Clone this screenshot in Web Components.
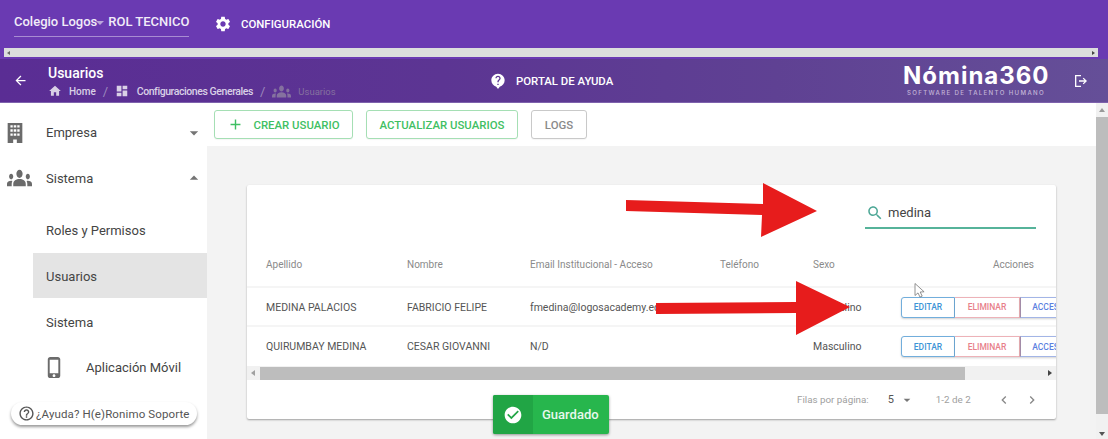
<!DOCTYPE html>
<html lang="es"><head><meta charset="utf-8"><title>Usuarios</title>
<style>
html,body{margin:0;padding:0;height:439px;overflow:hidden;background:#fff;font-family:Roboto,"Liberation Sans",sans-serif}
</style></head><body>
<nm-app></nm-app>
<script>
const P={
gear:'M19.14 12.94c.04-.3.06-.61.06-.94 0-.32-.02-.64-.07-.94l2.03-1.58c.18-.14.23-.41.12-.61l-1.92-3.32c-.12-.22-.37-.29-.59-.22l-2.39.96c-.5-.38-1.03-.7-1.62-.94l-.36-2.54c-.04-.24-.24-.41-.48-.41h-3.84c-.24 0-.43.17-.47.41l-.36 2.54c-.59.24-1.13.57-1.62.94l-2.39-.96c-.22-.08-.47 0-.59.22L2.74 8.87c-.12.21-.08.47.12.61l2.03 1.58c-.05.3-.09.63-.09.94s.02.64.07.94l-2.03 1.58c-.18.14-.23.41-.12.61l1.92 3.32c.12.22.37.29.59.22l2.39-.96c.5.38 1.03.7 1.62.94l.36 2.54c.05.24.24.41.48.41h3.84c.24 0 .44-.17.47-.41l.36-2.54c.59-.24 1.13-.56 1.62-.94l2.39.96c.22.08.47 0 .59-.22l1.92-3.32c.12-.22.07-.47-.12-.61l-2.01-1.58zM12 15.6c-1.98 0-3.6-1.62-3.6-3.6s1.62-3.6 3.6-3.6 3.6 1.62 3.6 3.6-1.62 3.6-3.6 3.6z',
back:'M20 11H7.83l5.59-5.59L12 4l-8 8 8 8 1.41-1.41L7.83 13H20v-2z',
home:'M10 20v-6h4v6h5v-8h3L12 3 2 12h3v8z',
dash:'M3 13h8V3H3v10zm0 8h8v-6H3v6zm10 0h8V11h-8v10zm0-18v6h8V3h-8z',
group:'M12 12.75c1.63 0 3.07.39 4.24.9 1.08.48 1.76 1.56 1.76 2.73V18H6v-1.61c0-1.18.68-2.26 1.76-2.73 1.17-.52 2.61-.91 4.24-.91zM4 13c1.1 0 2-.9 2-2s-.9-2-2-2-2 .9-2 2 .9 2 2 2zm1.13 1.1c-.37-.06-.74-.1-1.13-.1-.99 0-1.93.21-2.78.58C.48 14.9 0 15.62 0 16.43V18h4.5v-1.61c0-.83.23-1.61.63-2.29zM20 13c1.1 0 2-.9 2-2s-.9-2-2-2-2 .9-2 2 .9 2 2 2zm4 3.43c0-.81-.48-1.53-1.22-1.85-.85-.37-1.79-.58-2.78-.58-.39 0-.76.04-1.13.1.4.68.63 1.46.63 2.29V18H24v-1.57zM12 6c1.66 0 3 1.34 3 3s-1.34 3-3 3-3-1.34-3-3 1.34-3 3-3z',
phone:'M15.5 1h-8C6.12 1 5 2.12 5 3.5v17C5 21.88 6.12 23 7.5 23h8c1.38 0 2.5-1.12 2.5-2.5v-17C18 2.12 16.88 1 15.5 1zm-4 21c-.83 0-1.5-.67-1.5-1.5s.67-1.5 1.5-1.5 1.5.67 1.5 1.5-.67 1.5-1.5 1.5zm4.5-4H7V4h9v14z',
helpo:'M11 18h2v-2h-2v2zm1-16C6.48 2 2 6.48 2 12s4.48 10 10 10 10-4.48 10-10S17.52 2 12 2zm0 18c-4.41 0-8-3.59-8-8s3.59-8 8-8 8 3.59 8 8-3.59 8-8 8zm0-14c-2.21 0-4 1.79-4 4h2c0-1.1.9-2 2-2s2 .9 2 2c0 2-3 1.75-3 5h2c0-2.25 3-2.5 3-5 0-2.21-1.79-4-4-4z',
helpb:'M12 1C6.48 1 2 5.48 2 11c0 4.6 3.1 8.5 7.4 9.66L12 24l2.6-3.34C18.9 19.5 22 15.6 22 11c0-5.52-4.48-10-10-10zm1 17h-2v-2h2v2zm2.07-7.75l-.9.92C13.45 11.9 13 12.5 13 14h-2v-.5c0-1.1.45-2.1 1.17-2.83l1.24-1.26c.37-.36.59-.86.59-1.41 0-1.1-.9-2-2-2s-2 .9-2 2H8c0-2.21 1.79-4 4-4s4 1.79 4 4c0 .88-.36 1.68-.93 2.25z',
search:'M15.5 14h-.79l-.28-.27C15.41 12.59 16 11.11 16 9.5 16 5.91 13.09 3 9.5 3S3 5.91 3 9.5 5.91 16 9.5 16c1.61 0 3.09-.59 4.23-1.57l.27.28v.79l5 4.99L20.49 19l-4.99-5zm-6 0C7.01 14 5 11.99 5 9.5S7.01 5 9.5 5 14 7.01 14 9.5 11.99 14 9.5 14z',
check:'M12 2C6.48 2 2 6.48 2 12s4.48 10 10 10 10-4.48 10-10S17.52 2 12 2zm-2 15l-5-5 1.41-1.41L10 14.17l7.59-7.59L19 8l-9 9z',
plus:'M19 13h-6v6h-2v-6H5v-2h6V5h2v6h6v2z',
building:'M4 1h16v22h-6v-4h-4v4H4zM7 3.5v2.5h2.5V3.5zm3.6 0v2.5h2.8V3.5zm3.9 0v2.5H17V3.5zM7 8v2.5h2.5V8zm3.6 0v2.5h2.8V8zm3.9 0v2.5H17V8zM7 12.5V15h2.5v-2.5zm3.6 0V15h2.8v-2.5zm3.9 0V15H17v-2.5z',
exit:'M3 3h9v2H5v14h7v2H3zM16 7l5 5-5 5-1.4-1.4L17.2 13H9v-2h8.2l-2.6-2.6z',
down:'M7 10l5 5 5-5z',up:'M7 14l5-5 5 5z',
left:'M15.41 7.41L14 6l-6 6 6 6 1.41-1.41L10.83 12z',right:'M8.59 16.59L10 18l6-6-6-6-1.41 1.41L13.17 12z'
};
function def(name,css,html){
  customElements.define(name,class extends HTMLElement{
    constructor(){super();this.attachShadow({mode:'open'}).innerHTML='<style>'+css+'</style>'+html(this);}
  });
}
def('nm-icon',':host{display:inline-flex;width:var(--s,16px);height:var(--h,var(--s,16px));flex:none;color:inherit}svg{width:100%;height:100%;fill:currentColor;display:block}',
  e=>{const vb=e.getAttribute('vb');return `<svg viewBox="${vb||'0 0 24 24'}" ${vb?'preserveAspectRatio="none"':''} fill-rule="evenodd" aria-hidden="true"><path d="${P[e.getAttribute('name')]}"/></svg>`});

def('nm-topbar',`:host{display:flex;align-items:flex-start;height:48px;background:#6a3ab2;color:#fff;padding-left:14px;box-sizing:border-box}
.sel{width:175px;height:37px;border-bottom:1px solid rgba(255,255,255,.42);display:flex;align-items:center;font-size:13px;font-weight:500;box-sizing:border-box;padding-top:7px;white-space:nowrap;color:#f1ecf8}
.sel i{width:0;height:0;border:4px solid transparent;border-top-color:rgba(255,255,255,.55);border-bottom:0;margin:2px 3px 0 -1px}
.cfg{display:flex;align-items:center;gap:9px;margin:15px 0 0 25px;height:18px;font-size:11.4px;font-weight:500;--s:18px;white-space:nowrap}`,
 ()=>`<div class="sel"><span>Colegio Logos</span><i></i><span style="margin-left:1px">ROL TECNICO</span></div><div class="cfg"><nm-icon name="gear"></nm-icon><span>CONFIGURACIÓN</span></div>`);

def('nm-hscroll',`:host{display:flex;height:11px;background:#6a3ab2;padding:0 10px 0 4px;box-sizing:border-box}
.t{flex:1;height:9px;background:#dcdedd;display:flex;justify-content:space-between;align-items:center;padding:0 3px;box-sizing:border-box}
b{width:0;height:0;border:2px solid transparent}.l{border-right:3px solid #666;border-left:0}.r{border-left:3px solid #444;border-right:0}`,
 ()=>`<div class="t"><b class="l"></b><b class="r"></b></div>`);

def('nm-subbar',`:host{display:grid;grid-template-columns:48px 440px 1fr auto auto;align-items:center;height:44px;color:#fff;background:linear-gradient(90deg,#5a2d94 0%,#5c3593 40%,#5f4193 70%,#654f98 100%);box-sizing:border-box;border-bottom:1px solid #7e62ad}
.bk{--s:15px;margin-left:13px}
.tt{padding-top:2px}
.t{font-size:14px;font-weight:500;line-height:16px}
.bc{display:flex;align-items:center;font-size:10px;font-weight:500;height:14px;margin-top:3px;color:#d9d0e6;--s:14px;white-space:nowrap}
.bc nm-icon{margin-right:7px}.bc u{text-decoration:none;margin:0 7px;color:#9c88bd;font-weight:400;font-size:13px}
.dim{color:#85719f}
.pt{display:flex;align-items:center;gap:10px;font-size:11.4px;font-weight:500;--s:16px;white-space:nowrap;margin:1px 0 0 2px}
.lg{width:146px;margin-right:24px;text-align:center;line-height:1}
.n{font:700 24px/21px Inter,"Open Sans",sans-serif;letter-spacing:1px;white-space:nowrap;color:#fff}
.s{font:500 6.1px/8px Inter,"Open Sans",sans-serif;letter-spacing:1.35px;color:#c3b6d8;white-space:nowrap;margin-top:3px}
.ex{--s:16px;margin-right:19px}`,
 ()=>`<nm-icon class="bk" name="back"></nm-icon>
 <div class="tt"><div class="t">Usuarios</div><div class="bc"><nm-icon name="home"></nm-icon><span>Home</span><u>/</u><nm-icon name="dash" style="margin-right:7.5px"></nm-icon><span style="font-size:10.5px;letter-spacing:-.42px">Configuraciones Generales</span><u>/</u><nm-icon class="dim" name="group" vb="0 5.5 24 13" style="--s:19px;--h:13px;margin-right:7px"></nm-icon><span class="dim" style="font-weight:400;font-size:9.5px">Usuarios</span></div></div>
 <div class="pt"><nm-icon name="helpb"></nm-icon><span>PORTAL DE AYUDA</span></div>
 <div class="lg"><div class="n">Nómina360</div><div class="s">SOFTWARE DE TALENTO HUMANO</div></div>
 <nm-icon class="ex" name="exit"></nm-icon>`);

def('nm-nav-item',`:host{display:flex;align-items:center;height:45.6px;font-size:13px;color:#444;box-sizing:border-box;white-space:nowrap}
:host([sub]){margin-left:33px;padding:2px 0 0 13px}
:host([active]){background:#e4e4e4}
.ic{width:46px;box-sizing:border-box;color:#6b6b6b;display:flex;align-items:center}
.ic.building{--s:22px;padding-left:4px}
.ic.group{--s:25px;--h:18px;padding-left:7px}
.ic.phone{width:43px;margin-left:-3px;--s:23px}
.car{margin-left:auto;margin-right:3px;color:#747474;--s:20px}`,
 e=>{const i=e.getAttribute('icon'),c=e.getAttribute('caret');
  const vb=i==='group'?' vb="0 5.5 24 13"':'';
  return `${i?`<span class="ic ${i}"><nm-icon name="${i}"${vb}></nm-icon></span>`:''}<slot></slot>${c?`<nm-icon class="car" name="${c}"></nm-icon>`:''}`});

def('nm-sidebar',`:host{display:block;width:207px;flex:none;background:#fff;padding-top:7px;box-sizing:border-box}
.gap{height:6px}`,
 ()=>`<nm-nav-item icon="building" caret="down">Empresa</nm-nav-item><nm-nav-item icon="group" caret="up">Sistema</nm-nav-item><div class="gap"></div>
 <nm-nav-item sub>Roles y Permisos</nm-nav-item><nm-nav-item sub active>Usuarios</nm-nav-item><nm-nav-item sub>Sistema</nm-nav-item><nm-nav-item sub icon="phone">Aplicación Móvil</nm-nav-item>`);

def('nm-btn',`:host{display:inline-flex;align-items:center;justify-content:center;height:29px;box-sizing:border-box;border:1px solid var(--b,#a5dfb4);border-radius:3px;color:var(--c,#3fbf63);font-size:11.4px;font-weight:500;white-space:nowrap;background:#fff;gap:9px;box-shadow:0 1px 1px rgba(0,0,0,.04)}`,
 e=>`${e.hasAttribute('plus')?'<nm-icon name="plus" style="--s:17px"></nm-icon>':''}<slot></slot>`);

def('nm-toolbar',`:host{display:flex;gap:13px;background:#fff;height:43px;padding:7px 0 0 7px;box-sizing:border-box}`,
 ()=>`<nm-btn plus style="width:139px">CREAR USUARIO</nm-btn><nm-btn style="width:152px">ACTUALIZAR USUARIOS</nm-btn><nm-btn style="width:56px;--b:#c9c9c9;--c:#8a8a8a">LOGS</nm-btn>`);

def('nm-actions',`:host{display:flex;height:21px;font-size:8.5px;font-weight:500;white-space:nowrap}
span{display:flex;align-items:center;justify-content:center;box-sizing:border-box;border:1px solid;background:#fff;flex:none;box-shadow:0 1px 2px rgba(0,0,0,.18)}
.e{width:54px;color:#3d94d6;border-color:#72aedc;border-radius:3px 0 0 3px}
.d{width:65px;color:#e87f8b;border-color:#edb2b8;border-left:0}
.a{width:57px;color:#5b7fe0;border-color:#a3b5e6;border-left:1px solid #a28ca8}`,
 ()=>`<span class="e">EDITAR</span><span class="d">ELIMINAR</span><span class="a">ACCESO</span>`);

const cols='141px 123px 190px 93px 88px 1fr';
def('nm-row',`:host{display:grid;grid-template-columns:${cols};align-items:center;height:39px;padding-left:19px;border-bottom:2px solid #f5f5f5;box-sizing:border-box;font-size:10.5px;color:#555;white-space:nowrap}
::slotted(*){min-width:0}`,()=>`<slot></slot>`);

def('nm-card',`:host{display:block;height:234px;margin:39px 40px 0;background:#fff;box-shadow:0 1px 2px rgba(0,0,0,.35);position:relative;overflow:hidden;border-radius:2px}
.top{display:flex;justify-content:flex-end;height:44px;padding:0 20px 0 0}
.sr{width:171px;height:44px;border-bottom:2px solid #56b39a;box-sizing:border-box;display:flex;align-items:center;gap:4px;padding:13px 0 0 1px;font-size:13px;color:#444;--s:18px}
.sr nm-icon{color:#4fa897}
.hd{display:grid;grid-template-columns:${cols};align-items:center;height:59px;padding-left:19px;padding-top:14px;border-bottom:2px solid #f5f5f5;box-sizing:border-box;font-size:10px;color:#8a8a8a;white-space:nowrap}
.ac{text-align:right;padding-right:22px}
.hb{display:flex;height:14px;background:#f1f1f1;align-items:center;font-size:0}
.hb b{width:0;height:0;border:3px solid transparent;flex:none}
.hb .l{border-right:4px solid #a0a0a0;border-left:0;margin:0 5px 0 4px}
.hb .th{width:705px;height:13px;background:#bdbdbd;flex:none}
.hb .r{border-left:4px solid #444;border-right:0;margin-left:auto;margin-right:4px}
.ft{display:flex;align-items:center;height:39px;font-size:9.8px;color:#a0a0a0;white-space:nowrap;padding-left:550px}
.ft .five{color:#555;margin-left:19px;font-size:11px}
.ft nm-icon{color:#777}
`,
 ()=>`<div class="top"><div class="sr"><nm-icon name="search"></nm-icon><span>medina</span></div></div>
 <div class="hd"><span>Apellido</span><span>Nombre</span><span>Email Institucional - Acceso</span><span>Teléfono</span><span>Sexo</span><span class="ac">Acciones</span></div>
 <nm-row style="padding-top:1px"><span>MEDINA PALACIOS</span><span>FABRICIO FELIPE</span><span>fmedina@logosacademy.edu.ec</span><span></span><span>Masculino</span><nm-actions></nm-actions></nm-row>
 <nm-row style="border-bottom:0"><span>QUIRUMBAY MEDINA</span><span>CESAR GIOVANNI</span><span>N/D</span><span></span><span>Masculino</span><nm-actions></nm-actions></nm-row>
 <div class="hb"><b class="l"></b><span class="th"></span><b class="r"></b></div>
 <div class="ft"><span>Filas por página:</span><span class="five">5</span><nm-icon name="down" style="--s:16px;margin-left:5px"></nm-icon><span style="margin-left:21px">1-2 de 2</span><nm-icon name="left" style="--s:16px;margin-left:25px;color:#888"></nm-icon><nm-icon name="right" style="--s:16px;margin-left:12px;color:#888"></nm-icon></div>`);

def('nm-vscroll',`:host{display:flex;flex-direction:column;width:12px;flex:none;background:#f1f1f1;align-items:center;box-sizing:border-box}
b{width:0;height:0;border:3px solid transparent;flex:none}
.u{border-bottom:4px solid #999;border-top:0;margin-top:5px}
.th{width:12px;height:297px;background:#bdbdbd;margin-top:5px;flex:none}
.d{border-top:4px solid #555;border-bottom:0;margin-top:auto;margin-bottom:3px}`,
 ()=>`<b class="u"></b><span class="th"></span><b class="d"></b>`);

def('nm-help',`:host{position:absolute;left:11px;top:402px;width:186px;height:23px;box-sizing:border-box;background:#fff;border-radius:12px;box-shadow:0 2px 3px rgba(0,0,0,.4);display:flex;align-items:center;gap:1.5px;padding-left:6.5px;font-size:11.5px;letter-spacing:.12px;color:#555;white-space:nowrap;--s:17px}`,
 ()=>`<nm-icon name="helpo"></nm-icon><span>¿Ayuda? H(e)Ronimo Soporte</span>`);

def('nm-toast',`:host{position:absolute;left:493px;top:395px;width:116px;height:39px;background:#27b64d;border-radius:2px;box-shadow:0 1px 3px rgba(0,0,0,.4);display:flex;align-items:center;color:#e8f8ec;font-size:13px;font-weight:500;white-space:nowrap}
.i{width:40px;height:100%;background:#21a545;display:flex;align-items:center;justify-content:center;--s:20px;color:#fff;margin-right:9px;border-radius:2px 0 0 2px}`,
 ()=>`<span class="i"><nm-icon name="check"></nm-icon></span><span>Guardado</span>`);

def('nm-annot',`:host{position:absolute;left:0;top:0;width:1108px;height:439px;pointer-events:none}svg{display:block}`,
 ()=>`<svg width="1108" height="439" viewBox="0 0 1108 439" aria-hidden="true">
 <polygon fill="#e71c1c" points="626,200 763,204 763,183 817,211 761,237 762,215 626,211"/>
 <polygon fill="#e71c1c" points="656,303 796,302 796,281 850,307 796,335 796,313 656,314"/>
 <path d="M915 283.5v12l3-2.6 2 4.2 2.2-1-2-4.1 3.9-.2z" fill="#fff" stroke="#777" stroke-width=".8"/>
 </svg>`);

def('nm-app',`:host{display:block;position:relative;width:1108px;height:439px;overflow:hidden;color:#444}
.main{display:flex;height:336px}
.col{flex:1;min-width:0;background:#f3f3f3;overflow:hidden}`,
 ()=>`<nm-topbar></nm-topbar><nm-hscroll></nm-hscroll><nm-subbar></nm-subbar>
 <div class="main"><nm-sidebar></nm-sidebar><div class="col"><nm-toolbar></nm-toolbar><nm-card></nm-card></div><nm-vscroll></nm-vscroll></div>
 <nm-help></nm-help><nm-toast></nm-toast><nm-annot></nm-annot>`);
</script>
</body></html>
